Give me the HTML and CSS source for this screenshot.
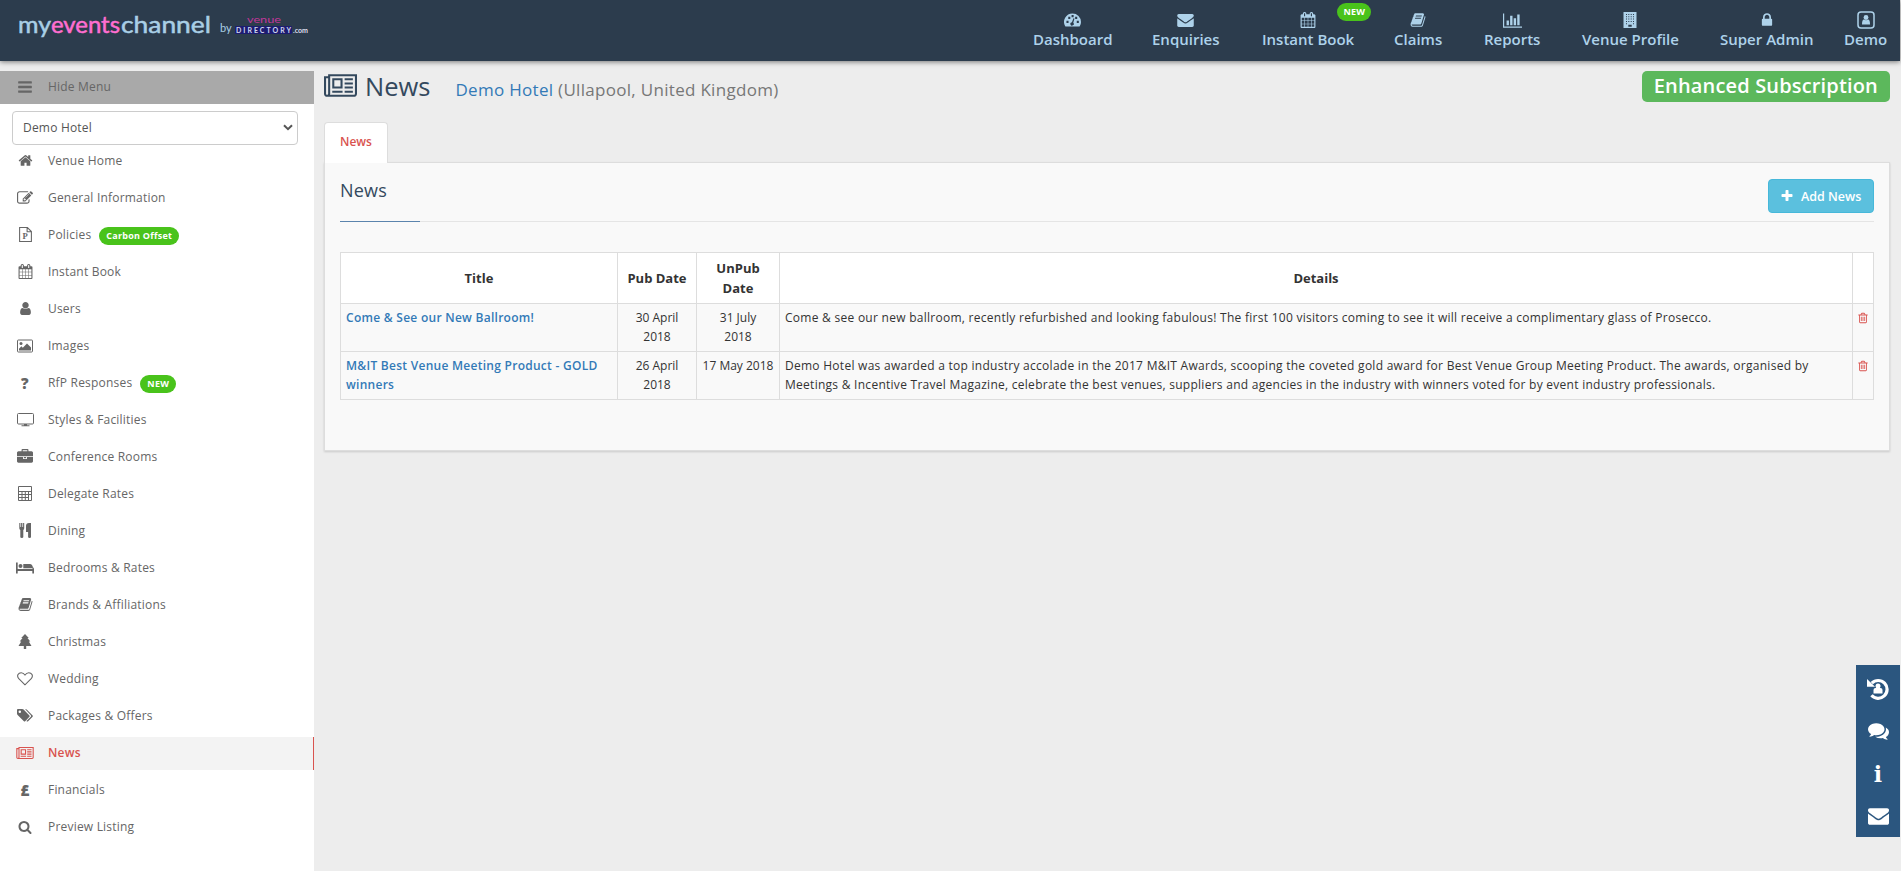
FILE: index.html
```html
<!DOCTYPE html>
<html lang="en">
<head>
    <meta charset="UTF-8">
    <meta name="viewport" content="width=device-width, initial-scale=1.0">
    <title>News - Demo Hotel</title>
    <link rel="stylesheet" href="styles.css">
</head>
<body>
    <!-- Icon sprite -->
    <svg class="sprite" xmlns="http://www.w3.org/2000/svg">
        <symbol id="i-bars" viewBox="0 0 1792 1792"><path d="M1664 1344v128q0 26-19 45t-45 19h-1408q-26 0-45-19t-19-45v-128q0-26 19-45t45-19h1408q26 0 45 19t19 45zm0-512v128q0 26-19 45t-45 19h-1408q-26 0-45-19t-19-45v-128q0-26 19-45t45-19h1408q26 0 45 19t19 45zm0-512v128q0 26-19 45t-45 19h-1408q-26 0-45-19t-19-45v-128q0-26 19-45t45-19h1408q26 0 45 19t19 45z"/></symbol>
        <symbol id="i-home" viewBox="0 0 1792 1792"><path d="M1472 992v480q0 26-19 45t-45 19h-384v-384h-256v384h-384q-26 0-45-19t-19-45v-480q0-1 .5-3t.5-3l575-474 575 474q1 2 1 6zm223-69l-62 74q-8 9-21 11h-3q-13 0-21-7l-692-577-692 577q-12 8-24 7-13-2-21-11l-62-74q-8-10-7-23.5t11-21.5l719-599q32-26 76-26t76 26l244 204v-195q0-14 9-23t23-9h192q14 0 23 9t9 23v408l219 182q10 8 11 21.5t-7 23.5z"/></symbol>
        <symbol id="i-edit" viewBox="0 0 1792 1792"><path d="M888 1184l116-116-152-152-116 116v56h96v96h56zm440-720q-16-16-33 1l-350 350q-17 17-1 33t33-1l350-350q17-17 1-33zm80 594v190q0 119-84.5 203.5t-203.5 84.5h-832q-119 0-203.5-84.5t-84.5-203.5v-832q0-119 84.5-203.5t203.5-84.5h832q63 0 117 25 15 7 18 23 3 17-9 29l-49 49q-14 14-32 8-23-6-45-6h-832q-66 0-113 47t-47 113v832q0 66 47 113t113 47h832q66 0 113-47t47-113v-126q0-13 9-22l64-64q15-15 35-7t20 29zm-96-738l288 288-672 672h-288v-288zm444 132l-92 92-288-288 92-92q28-28 68-28t68 28l152 152q28 28 28 68t-28 68z"/></symbol>
        <symbol id="i-file" viewBox="0 0 14 14"><path d="M1.5.5h7.3l3.700 3.700v9.300h-11zM8.500.8v3.700h3.700" fill="none" stroke="currentColor"/><text x="4.200" y="11.500" class="icon-letter-sm">P</text></symbol>
        <symbol id="i-calendar" viewBox="0 0 1792 1792"><path d="M192 1664h288v-288h-288v288zm352 0h320v-288h-320v288zm-352-352h288v-320h-288v320zm352 0h320v-320h-320v320zm-352-384h288v-288h-288v288zm736 736h320v-288h-320v288zm-384-736h320v-288h-320v288zm768 736h288v-288h-288v288zm-384-352h320v-320h-320v320zm-352-864v-288q0-13-9.5-22.5t-22.5-9.5h-64q-13 0-22.5 9.5t-9.5 22.5v288q0 13 9.5 22.5t22.5 9.5h64q13 0 22.5-9.5t9.5-22.5zm736 864h288v-320h-288v320zm-384-384h320v-288h-320v288zm384 0h288v-288h-288v288zm32-480v-288q0-13-9.5-22.5t-22.5-9.5h-64q-13 0-22.5 9.5t-9.5 22.5v288q0 13 9.5 22.5t22.5 9.5h64q13 0 22.5-9.5t9.5-22.5zm384-64v1280q0 52-38 90t-90 38h-1408q-52 0-90-38t-38-90v-1280q0-52 38-90t90-38h128v-96q0-66 47-113t113-47h64q66 0 113 47t47 113v96h384v-96q0-66 47-113t113-47h64q66 0 113 47t47 113v96h128q52 0 90 38t38 90z"/></symbol>
        <symbol id="i-user" viewBox="0 0 1792 1792"><path d="M1536 1399q0 109-62.5 187t-150.5 78h-854q-88 0-150.5-78t-62.5-187q0-85 8.5-160.5t31.5-152 58.5-131 94-89 134.5-34.5q131 128 313 128t313-128q76 0 134.5 34.5t94 89 58.5 131 31.5 152 8.5 160.5zm-256-887q0 159-112.5 271.5t-271.5 112.5-271.5-112.5-112.5-271.5 112.5-271.5 271.5-112.5 271.5 112.5 112.5 271.5z"/></symbol>
        <symbol id="i-image" viewBox="0 0 16 14"><rect x=".5" y="1" width="15" height="12" rx=".8" fill="none" stroke="currentColor"/><circle cx="4" cy="4.5" r="1.5"/><path d="M2 11.5V9.700l2.400-2.400 1.400 1.400L10 4.500l4 4v3z"/></symbol>
        <symbol id="i-desktop" viewBox="0 0 17 14"><rect x=".5" y=".5" width="16" height="10.5" rx="1" fill="none" stroke="currentColor"/><path d="M7 11h3v1.300h2.500v1h-8v-1H7z"/></symbol>
        <symbol id="i-briefcase" viewBox="0 0 1792 1792"><path d="M640 256h512v-128h-512v128zm1152 640v480q0 66-47 113t-113 47h-1472q-66 0-113-47t-47-113v-480h672v160q0 26 19 45t45 19h320q26 0 45-19t19-45v-160h672zm-768 0v128h-256v-128h256zm768-480v384h-1792v-384q0-66 47-113t113-47h352v-160q0-40 28-68t68-28h576q40 0 68 28t28 68v160h352q66 0 113 47t47 113z"/></symbol>
        <symbol id="i-calc" viewBox="0 0 14 15"><path d="M.5.5h13v14H.5zM1 5.500h12M1 8.500h12M1 11.500h9.500M4 5.500v9M7.300 5.500v9M10.500 5.500v9" fill="none" stroke="currentColor"/></symbol>
        <symbol id="i-cutlery" viewBox="0 0 13 15"><path d="M.3 0h1.100v4h.7V0h1.300v4h.7V0h1.100v5.200Q5.200 6.400 4.300 6.900V14q0 1-1.500 1t-1.500-1V6.900Q.3 6.300.3 5.200zM7 3q0-3 3-3h2v14q0 1-1.400 1t-1.500-1V9H7z"/></symbol>
        <symbol id="i-bed" viewBox="0 0 18 12"><path d="M0 .5h1.700V7H16.500V5.200Q18 5.500 18 7v4.500h-1.700V9H1.700v2.500H0zM7.300 6.200V2h6.500q3 .3 3.200 4.200z"/><circle cx="4.500" cy="4" r="2"/></symbol>
        <symbol id="i-book" viewBox="0 0 1792 1792"><path d="M1703 478q40 57 18 129l-275 906q-19 64-76.500 107.500t-122.500 43.500h-923q-77 0-148.500-53.500t-99.500-131.500q-24-67-2-127 0-4 3-27t4-37q1-8-3-21.500t-3-19.500q2-11 8-21t16.500-23.500 16.500-23.500q23-38 45-91.500t30-91.500q3-10 .5-30t-.5-28q3-11 17-28t17-23q21-36 42-92t25-90q1-9-2.500-32t.5-28q4-13 22-30.500t22-22.500q19-26 42.500-84.500t27.500-96.500q1-8-3-25.500t-2-26.500q2-8 9-18t18-23 17-21q8-12 16.500-30.500t15-35 16-36 19.500-32 26.500-23.500 36-11.500 47.500 5.500l-1 3q38-9 51-9h761q74 0 114 56t18 130l-274 906q-36 119-71.500 153.500t-128.500 34.500h-869q-27 0-38 15-11 16-1 43 24 70 144 70h923q29 0 56-15.500t35-41.500l300-987q7-22 5-57 38 15 59 43zm-1064 2q-4 13 2 22.500t20 9.500h608q13 0 25.500-9.500t16.500-22.500l21-64q4-13-2-22.500t-20-9.500h-608q-13 0-25.500 9.500t-16.500 22.500zm-83 256q-4 13 2 22.500t20 9.500h608q13 0 25.500-9.500t16.500-22.500l21-64q4-13-2-22.500t-20-9.500h-608q-13 0-25.500 9.500t-16.500 22.500z"/></symbol>
        <symbol id="i-tree" viewBox="0 0 14 15"><path d="M7 0l3.800 4H9.500l2.800 3.600h-1.500L13.500 12H8.200v3H5.800v-3H.5l2.700-4.400H1.700L4.500 4H3.200z"/></symbol>
        <symbol id="i-heart" viewBox="0 0 16 14"><path d="M8 12.800L1.800 6.700C-.8 3.500 1.500.7 4.200.7 6.200.7 7.300 2 8 3 8.700 2 9.800.7 11.800.7c2.700 0 5 2.800 2.400 6z" fill="none" stroke="currentColor" stroke-width="1.100"/></symbol>
        <symbol id="i-tags" viewBox="0 0 16 13"><path fill-rule="evenodd" d="M0 .9Q0 0 .9 0h4.300q.8 0 1.400.6l5.800 5.800q.7.700 0 1.400L8.200 12.300q-.7.500-1.300 0L.6 6Q0 5.300 0 4.600zM2.800 1.500a1.200 1.200 0 1 0 0 2.500 1.200 1.200 0 0 0 0-2.500z"/><path d="M8 0q1 0 1.700.6l5.900 5.800q.6.700 0 1.400l-4.500 4.500q-.7.600-1.400 0l-.3-.3 4.400-4.200q.6-.8 0-1.600z"/></symbol>
        <symbol id="i-news" viewBox="0 128 2048 1408"><path d="M1024 512h-384v384h384v-384zm128 640v128h-640v-128h640zm0-768v640h-640v-640h640zm640 768v128h-512v-128h512zm0-256v128h-512v-128h512zm0-256v128h-512v-128h512zm0-256v128h-512v-128h512zm-1536 960v-960h-128v960q0 26 19 45t45 19 45-19 19-45zm1664 0v-1088h-1536v1088q0 33-11 64h1483q26 0 45-19t19-45zm128-1216v1216q0 80-56 136t-136 56h-1664q-80 0-136-56t-56-136v-1088h256v-128h1792z"/></symbol>
        <symbol id="i-search" viewBox="0 0 1792 1792"><path d="M1216 832q0-185-131.500-316.500t-316.500-131.500-316.500 131.500-131.500 316.500 131.500 316.500 316.500 131.500 316.500-131.500 131.500-316.500zm512 832q0 52-38 90t-90 38q-54 0-90-38l-343-342q-179 124-399 124-143 0-273.500-55.500t-225-150-150-225-55.500-273.500 55.500-273.500 150-225 225-150 273.500-55.500 273.500 55.500 225 150 150 225 55.500 273.500q0 220-124 399l343 343q37 37 37 90z"/></symbol>
        <symbol id="i-dash" viewBox="0 0 18 14"><path fill-rule="evenodd" d="M9 0a9 9 0 0 1 9 9q0 2.500-1.300 4.600-.3.400-.8.400H2.100q-.5 0-.8-.4A9 9 0 0 1 9 0zM2.600 7.800v2.400h2.200V7.800zM4.500 3.600v2.300h2.200V3.600zM8 1.800V4h2.200V1.800zM11.800 3.600v2.300H14V3.600zM13.500 7.800v2.400h2.200V7.800zM10 5.200L8.400 9.300a1.800 1.800 0 1 0 1.400.5l1.300-4.300z"/></symbol>
        <symbol id="i-envelope" viewBox="0 256 1792 1408"><path d="M1792 710v794q0 66-47 113t-113 47h-1472q-66 0-113-47t-47-113v-794q44 49 101 87 362 246 497 345 57 42 92.500 65.500t94.500 48 110 24.500h2q51 0 110-24.500t94.500-48 92.500-65.500q170-123 498-345 57-39 100-87zm0-294q0 79-49 151t-122 123q-376 261-468 325-10 7-42.500 31t-54 38.500-52 32.500-57.500 27-50 9h-2q-23 0-50-9t-57.500-27-52-32.500-54-38.500-42.500-31q-91-64-262-182.500t-205-142.500q-62-42-117-115.500t-55-136.500q0-78 41.500-130t118.500-52h1472q65 0 112.500 47t47.500 113z"/></symbol>
        <symbol id="i-chart" viewBox="0 128 2048 1536"><path d="M640 896v512h-256v-512h256zm384-512v1024h-256v-1024h256zm1024 1152v128h-2048v-1536h128v1408h1920zm-640-896v768h-256v-768h256zm384-384v1152h-256v-1152h256z"/></symbol>
        <symbol id="i-building" viewBox="0 0 14 16"><path fill-rule="evenodd" d="M.5 0h13v16H.5zM3 2v1h1V2zm2.300 0v1h1V2zm2.400 0v1h1V2zM10 2v1h1V2zM3 4.300v1h1v-1zm2.300 0v1h1v-1zm2.400 0v1h1v-1zm2.300 0v1h1v-1zM3 6.600v1h1v-1zm2.300 0v1h1v-1zm2.400 0v1h1v-1zm2.300 0v1h1v-1zM3 8.900v1h1v-1zm2.300 0v1h1v-1zm2.400 0v1h1v-1zm2.300 0v1h1v-1zM3 11.200v1h1v-1zm7 0v1h1v-1zM5.300 12.800v2h3.400v-2z"/></symbol>
        <symbol id="i-lock" viewBox="0 0 1792 1792"><path d="M640 768h512v-192q0-106-75-181t-181-75-181 75-75 181v192zm832 96v576q0 40-28 68t-68 28h-960q-40 0-68-28t-28-68v-576q0-40 28-68t68-28h32v-192q0-184 132-316t316-132 316 132 132 316v192h32q40 0 68 28t28 68z"/></symbol>
        <symbol id="i-account" viewBox="0 0 18 18"><rect x="1" y="1" width="16" height="16" rx="3" fill="none" stroke="currentColor" stroke-width="1.500"/><circle cx="9" cy="6.500" r="2.400"/><path d="M5 13.500q0-5 2-5 2 1.300 4 0 2 0 2 5z"/></symbol>
        <symbol id="i-plus" viewBox="0 0 1792 1792"><path d="M1600 736v192q0 40-28 68t-68 28h-416v416q0 40-28 68t-68 28h-192q-40 0-68-28t-28-68v-416h-416q-40 0-68-28t-28-68v-192q0-40 28-68t68-28h416v-416q0-40 28-68t68-28h192q40 0 68 28t28 68v416h416q40 0 68 28t28 68z"/></symbol>
        <symbol id="i-trash" viewBox="0 0 1792 1792"><path d="M704 736v576q0 14-9 23t-23 9h-64q-14 0-23-9t-9-23v-576q0-14 9-23t23-9h64q14 0 23 9t9 23zm256 0v576q0 14-9 23t-23 9h-64q-14 0-23-9t-9-23v-576q0-14 9-23t23-9h64q14 0 23 9t9 23zm256 0v576q0 14-9 23t-23 9h-64q-14 0-23-9t-9-23v-576q0-14 9-23t23-9h64q14 0 23 9t9 23zm128 724v-948h-896v948q0 22 7 40.500t14.500 27 10.500 8.500h832q3 0 10.500-8.500t14.500-27 7-40.500zm-672-1076h448l-48-117q-7-9-17-11h-317q-10 2-17 11zm928 32v64q0 14-9 23t-23 9h-96v948q0 83-47 143.500t-113 60.500h-832q-66 0-113-58.500t-47-141.500v-952h-96q-14 0-23-9t-9-23v-64q0-14 9-23t23-9h309l70-167q15-37 54-63t79-26h320q40 0 79 26t54 63l70 167h309q14 0 23 9t9 23z"/></symbol>
        <symbol id="i-history" viewBox="0 0 22 22"><path d="M4.800 5.200A8.900 8.900 0 1 1 4.500 17.300" fill="none" stroke="currentColor" stroke-width="3.200"/><path d="M0 1v7.800h8z"/><circle cx="11" cy="8" r="2.500"/><path d="M6.500 15.500V12q0-2 2-2h5q2 0 2 2v3.500z"/></symbol>
        <symbol id="i-comments" viewBox="0 256 1792 1408"><path d="M1408 768q0 139-94 257t-256.500 186.500-353.500 68.500q-86 0-176-16-124 88-278 128-36 9-86 16h-3q-11 0-20.500-8t-11.500-21q-1-3-1-6.500t.5-6.500 2-6l2.500-5 3.500-5.500 4-5 4.500-5 4-4.500q5-6 23-25t26-29.500 22.500-29 25-38.500 20.500-44q-124-72-195-177t-71-224q0-139 94-257t256.500-186.500 353.500-68.500 353.500 68.500 256.500 186.500 94 257zm384 256q0 120-71 224.500t-195 176.500q10 24 20.500 44t25 38.500 22.500 29 26 29.500 23 25q1 1 4 4.500t4.500 5 4 5 3.500 5.500l2.500 5 2 6 .5 6.500-1 6.500q-3 14-13 22t-22 7q-50-7-86-16-154-40-278-128-90 16-176 16-271 0-472-132 58 4 88 4 161 0 309-45t264-129q125-92 192-212t67-254q0-77-23-152 129 71 204 178t75 230z"/></symbol>
    </svg>

    <header class="topbar">
        <svg class="logo" width="300" height="44">
            <g class="logo-name">
                <text x="0" y="25" textLength="33" lengthAdjust="spacingAndGlyphs" class="logo-blue">my</text>
                <text x="33" y="25" textLength="69" lengthAdjust="spacingAndGlyphs" class="logo-pink">events</text>
                <text x="103" y="25" textLength="90" lengthAdjust="spacingAndGlyphs" class="logo-blue">channel</text>
            </g>
            <text x="202" y="24" class="logo-by">by</text>
            <text x="229" y="15" textLength="34" lengthAdjust="spacingAndGlyphs" class="logo-venue">venue</text>
            <rect x="217" y="18" width="57" height="8" rx="1" class="logo-plate"/>
            <text x="218" y="25" textLength="55" class="logo-directory">DIRECTORY</text>
            <text x="275" y="25" textLength="15" lengthAdjust="spacingAndGlyphs" class="logo-com">.com</text>
        </svg>
        <nav class="topnav">
            <a href="#"><svg width="17" height="14"><use href="#i-dash"/></svg><span>Dashboard</span></a>
            <a href="#"><svg width="17" height="13"><use href="#i-envelope"/></svg><span>Enquiries</span></a>
            <a href="#"><svg width="16" height="16"><use href="#i-calendar"/></svg><span>Instant Book</span><b class="badge badge-nav">NEW</b></a>
            <a href="#"><svg width="16" height="16"><use href="#i-book"/></svg><span>Claims</span></a>
            <a href="#"><svg width="19" height="15"><use href="#i-chart"/></svg><span>Reports</span></a>
            <a href="#"><svg width="14" height="16"><use href="#i-building"/></svg><span>Venue Profile</span></a>
            <a href="#"><svg width="16" height="16"><use href="#i-lock"/></svg><span>Super Admin</span></a>
            <a href="#"><svg width="18" height="18"><use href="#i-account"/></svg><span>Demo</span></a>
        </nav>
    </header>

    <div class="page">
        <aside class="sidebar">
            <a href="#" class="hide-menu"><i><svg width="16" height="16"><use href="#i-bars"/></svg></i>Hide Menu</a>
            <div class="venue-select">
                <span>Demo Hotel</span>
                <svg width="10" height="7" viewBox="0 0 10 7"><path d="M1 1.200l4 4 4-4" fill="none" stroke="currentColor" stroke-width="2"/></svg>
            </div>
            <ul class="menu">
                <li><i><svg width="15" height="15"><use href="#i-home"/></svg></i>Venue Home</li>
                <li><i><svg width="16" height="16"><use href="#i-edit"/></svg></i>General Information</li>
                <li><i><svg width="15" height="15"><use href="#i-file"/></svg></i>Policies <b class="badge">Carbon Offset</b></li>
                <li><i><svg width="15" height="15"><use href="#i-calendar"/></svg></i>Instant Book</li>
                <li><i><svg width="15" height="15"><use href="#i-user"/></svg></i>Users</li>
                <li><i><svg width="16" height="14"><use href="#i-image"/></svg></i>Images</li>
                <li><i class="glyph">?</i>RfP Responses <b class="badge">NEW</b></li>
                <li><i><svg width="17" height="14"><use href="#i-desktop"/></svg></i>Styles &amp; Facilities</li>
                <li><i><svg width="16" height="16"><use href="#i-briefcase"/></svg></i>Conference Rooms</li>
                <li><i><svg width="14" height="15"><use href="#i-calc"/></svg></i>Delegate Rates</li>
                <li><i><svg width="13" height="15"><use href="#i-cutlery"/></svg></i>Dining</li>
                <li><i><svg width="18" height="12"><use href="#i-bed"/></svg></i>Bedrooms &amp; Rates</li>
                <li><i><svg width="15" height="15"><use href="#i-book"/></svg></i>Brands &amp; Affiliations</li>
                <li><i><svg width="14" height="15"><use href="#i-tree"/></svg></i>Christmas</li>
                <li><i><svg width="16" height="14"><use href="#i-heart"/></svg></i>Wedding</li>
                <li><i><svg width="16" height="13"><use href="#i-tags"/></svg></i>Packages &amp; Offers</li>
                <li class="active"><i><svg width="18" height="12"><use href="#i-news"/></svg></i>News</li>
                <li><i class="glyph">£</i>Financials</li>
                <li><i><svg width="14" height="14"><use href="#i-search"/></svg></i>Preview Listing</li>
            </ul>
        </aside>

        <main class="content">
            <div class="title-row">
                <svg width="33" height="23"><use href="#i-news"/></svg>
                <h1>News</h1>
                <p class="venue"><a href="#">Demo Hotel</a> (Ullapool, United Kingdom)</p>
                <span class="subscription">Enhanced Subscription</span>
            </div>
            <div class="tabs"><a href="#" class="tab">News</a></div>
            <section class="panel">
                <div class="panel-head">
                    <h2>News</h2>
                    <button type="button"><svg width="14" height="14"><use href="#i-plus"/></svg>Add News</button>
                </div>
                <table class="news-table">
                    <colgroup><col class="c-title"><col class="c-pub"><col class="c-unpub"><col><col class="c-del"></colgroup>
                    <thead>
                        <tr><th>Title</th><th>Pub Date</th><th>UnPub Date</th><th>Details</th><th></th></tr>
                    </thead>
                    <tbody>
                        <tr>
                            <td><a href="#">Come &amp; See our New Ballroom!</a></td>
                            <td class="date">30 April<br>2018</td>
                            <td class="date">31 July<br>2018</td>
                            <td>Come &amp; see our new ballroom, recently refurbished and looking fabulous! The first 100 visitors coming to see it will receive a complimentary glass of Prosecco.</td>
                            <td class="del"><svg width="12" height="12"><use href="#i-trash"/></svg></td>
                        </tr>
                        <tr>
                            <td><a href="#">M&amp;IT Best Venue Meeting Product - GOLD<br>winners</a></td>
                            <td class="date">26 April<br>2018</td>
                            <td class="date">17 May 2018</td>
                            <td>Demo Hotel was awarded a top industry accolade in the 2017 M&amp;IT Awards, scooping the coveted gold award for Best Venue Group Meeting Product. The awards, organised by<br>Meetings &amp; Incentive Travel Magazine, celebrate the best venues, suppliers and agencies in the industry with winners voted for by event industry professionals.</td>
                            <td class="del"><svg width="12" height="12"><use href="#i-trash"/></svg></td>
                        </tr>
                    </tbody>
                </table>
            </section>
        </main>
    </div>

    <div class="quick-bar">
        <svg width="22" height="22"><use href="#i-history"/></svg>
        <svg width="21" height="17"><use href="#i-comments"/></svg>
        <span class="info">i</span>
        <svg width="21" height="17"><use href="#i-envelope"/></svg>
    </div>
</body>
</html>
```
FILE: styles.css
```css
* {
    box-sizing: border-box;
}
body {
    margin: 0;
    background-color: #ededed;
    font-family: "Trebuchet MS", "Open Sans", sans-serif;
    font-size: 12px;
    color: #333;
    height: 871px;
    overflow: hidden;
}
a {
    color: #337ab7;
    text-decoration: none;
}
svg {
    fill: currentColor;
    flex: none;
}
.sprite {
    display: none;
}
.icon-letter-sm {
    font: bold 8px "Liberation Serif", serif;
}
.badge {
    display: inline-block;
    height: 18px;
    line-height: 18px;
    padding: 0 7px;
    margin: 3px 0 0 8px;
    border-radius: 9px;
    background-color: #49c31b;
    color: #fff;
    font-size: 9px;
    font-weight: bold;
    letter-spacing: 0.25px;
}

/* Top bar */
.topbar {
    position: relative;
    z-index: 2;
    display: flex;
    justify-content: space-between;
    height: 61px;
    margin-right: 1px;
    padding-left: 18px;
    background-color: #2c3c4d;
    box-shadow: 0 1px 5px rgba(0,0,0,0.5);
}
.logo {
    margin-top: 8px;
}
.logo-name {
    font: 23px "Lato", sans-serif;
    stroke-width: 0.5px;
}
.logo-blue {
    fill: #a9cfe6;
    stroke: #a9cfe6;
}
.logo-pink {
    fill: #ff6ed0;
    stroke: #ff6ed0;
}
.logo-by {
    font: 11px "Lato", sans-serif;
    fill: #a9cfe6;
}
.logo-venue {
    font: 10px "Lato", sans-serif;
    fill: #c2379b;
}
.logo-plate {
    fill: #1d1c70;
}
.logo-directory {
    font: bold 7px "Lato", sans-serif;
    fill: #cfd6ee;
}
.logo-com {
    font: bold 7px "Lato", sans-serif;
    fill: #dde;
}
.topnav {
    display: grid;
    grid-template-columns: 119px 110px 132px 90px 98px 138px 124px 56px;
    justify-items: start;
}
.topnav a {
    position: relative;
    display: grid;
    grid-template-rows: 18px 20px;
    justify-items: center;
    align-items: center;
    align-content: start;
    padding-top: 11px;
    color: #aed2ea;
    font-size: 15px;
    font-weight: 600;
    white-space: nowrap;
}
.badge-nav {
    position: absolute;
    top: 3px;
    right: -17px;
    margin: 0;
    padding: 0 6px;
}

/* Side menu */
.page {
    display: flex;
    height: 810px;
    padding-top: 10px;
}
.sidebar {
    width: 314px;
    background-color: #fff;
    color: #666;
    font-size: 12px;
    letter-spacing: 0.2px;
}
.sidebar i {
    display: flex;
    justify-content: center;
    width: 18px;
    margin: 0 14px 0 16px;
    font-style: normal;
}
.sidebar .glyph {
    font-size: 15px;
    font-weight: 800;
}
.hide-menu {
    display: flex;
    align-items: center;
    height: 33px;
    padding-bottom: 2px;
    background-color: #a9a9a9;
    color: #666;
}
.venue-select {
    display: flex;
    align-items: center;
    justify-content: space-between;
    height: 34px;
    margin: 7px 16px 0 12px;
    padding: 0 4px 1px 10px;
    border: 1px solid #ccc;
    border-radius: 4px;
    color: #555;
}
.menu {
    list-style: none;
    margin: 0;
    padding: 0;
}
.menu li {
    display: flex;
    align-items: center;
    height: 33px;
    margin-bottom: 4px;
    padding-bottom: 2px;
}
.menu .active {
    background-color: #f3f3f3;
    border-right: 1px solid #d9534f;
    color: #d9534f;
    font-weight: 600;
}

/* Main column */
.content {
    flex: 1;
    padding: 0 11px 0 10px;
}
.title-row {
    display: flex;
    align-items: center;
    height: 31px;
    color: #34495e;
}
.title-row svg {
    margin-top: -3px;
}
.title-row h1 {
    margin: -2px 25px 0 8px;
    font-size: 25.500px;
    font-weight: 400;
}
.venue {
    margin: 5px 0 0;
    font-size: 17px;
    letter-spacing: 0.3px;
    color: #777;
}
.subscription {
    height: 31px;
    margin-left: auto;
    padding: 0 12px;
    border-radius: 5px;
    background-color: #5cb85c;
    color: #fff;
    font-size: 20px;
    font-weight: 600;
    letter-spacing: 0.160px;
    line-height: 29px;
}
.tabs {
    display: flex;
    margin-top: 20px;
}
.tab {
    position: relative;
    height: 41px;
    margin-bottom: -1px;
    padding: 0 15px;
    border: 1px solid #ddd;
    border-bottom: 0;
    border-radius: 4px 4px 0 0;
    background-color: #fff;
    color: #d9534f;
    font-weight: 600;
    line-height: 37px;
}
.panel {
    height: 289px;
    padding: 16px 15px;
    border: 1px solid #ddd;
    background-color: #f9f9f9;
    box-shadow: 0 1px 2px rgba(0,0,0,0.15);
}
.panel-head {
    position: relative;
    display: flex;
    justify-content: space-between;
    height: 43px;
    border-bottom: 1px solid #e5e5e5;
}
.panel-head::after {
    content: "";
    position: absolute;
    left: 0;
    bottom: -1px;
    width: 80px;
    height: 1px;
    background-color: #5b84ad;
}
.panel h2 {
    margin: 0;
    color: #34495e;
    font-size: 18px;
    font-weight: 400;
    letter-spacing: 0.2px;
    line-height: 22px;
}
.panel button {
    display: flex;
    align-items: center;
    gap: 7px;
    width: 106px;
    height: 34px;
    padding: 0 11px;
    border: 1px solid #46b8da;
    border-radius: 4px;
    background-color: #5bc0de;
    color: #fff;
    font: 600 12.500px "Trebuchet MS", "Open Sans", sans-serif;
    white-space: nowrap;
}
.news-table {
    width: 1534px;
    margin-top: 30px;
    border-collapse: collapse;
    table-layout: fixed;
    line-height: 18.57px;
}
.c-title { width: 277px; }
.c-pub { width: 79px; }
.c-unpub { width: 83px; }
.c-del { width: 21px; }
.news-table th,
.news-table td {
    padding: 5px;
    border: 1px solid #ddd;
    vertical-align: top;
}
.news-table th {
    height: 51px;
    background-color: #fff;
    font-size: 13px;
    line-height: 20px;
    vertical-align: middle;
}
.news-table td {
    letter-spacing: 0.270px;
}
.news-table td a {
    font-weight: 600;
}
.news-table .date {
    text-align: center;
    letter-spacing: 0;
    white-space: nowrap;
}
.news-table .del {
    padding: 8px 0 0 4px;
    color: #d9534f;
    line-height: 0;
}

/* Floating shortcuts */
.quick-bar {
    position: fixed;
    right: 1px;
    top: 665px;
    z-index: 3;
    display: grid;
    grid-template-rows: repeat(4, 42.500px);
    place-items: center;
    width: 44px;
    height: 172px;
    padding-top: 3px;
    background-color: #2b567f;
    color: #fff;
}
.info {
    font: bold 22px "DejaVu Serif", serif;
}
```
